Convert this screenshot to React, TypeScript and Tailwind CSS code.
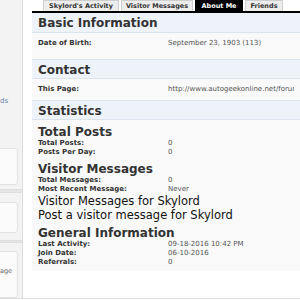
import React from 'react';

const tabs = [
    { label: "Skylord's Activity", w: 'w-[76px]', active: false },
    { label: 'Visitor Messages', w: 'w-[72px]', active: false },
    { label: 'About Me', w: 'w-[48px]', active: true },
    { label: 'Friends', w: 'w-[38px]', active: false },
];

function Header({ title, top }: { title: string; top?: boolean }) {
    return (
        <div
            className={`h-[20px] bg-[#eef3f9] border-b border-[#dbe4ee] pl-[6px] text-[12px] leading-[20px] font-bold text-[#333] ${
                top ? '' : 'border-t'
            }`}
        >
            {title}
        </div>
    );
}

function Row({ label, value }: { label: string; value: string }) {
    return (
        <div className="grid grid-cols-[130px_1fr] text-[7px] leading-[9px] whitespace-nowrap">
            <span className="font-bold text-[#333]">{label}</span>
            <span className="text-[#555] overflow-hidden">{value}</span>
        </div>
    );
}

function SubHead({ title, className = '' }: { title: string; className?: string }) {
    return <div className={`text-[12px] leading-[13px] font-bold text-[#333] ${className}`}>{title}</div>;
}

export default function App() {
    return (
        <div className="w-[300px] h-[300px] overflow-hidden bg-white flex flex-col font-['DejaVu_Sans',sans-serif]">
            <div className="h-[298px] flex">
                {/* sidebar, cut off at the left edge */}
                <aside className="w-[23px] shrink-0 bg-[#f3f3f3] border-r border-[#dcdcdc] overflow-hidden flex flex-col pt-[97px]">
                    <div className="text-[7px] leading-[8px] text-[#6a86a6] whitespace-nowrap">ds</div>
                    <div className="mt-[43px] -ml-[4px] w-[22px] h-[41px] bg-[#fbfbfb] border border-[#e2e2e2] rounded-[3px]" />
                    <div className="mt-[4px] h-[4px] bg-[#e6e6e6] border-y border-[#dedede]" />
                    <div className="mt-[9px] -ml-[4px] w-[22px] h-[34px] bg-[#fbfbfb] border border-[#e2e2e2] rounded-[3px]" />
                    <div className="mt-[7px] h-[4px] bg-[#e6e6e6] border-y border-[#dedede]" />
                    <div className="mt-[8px] -ml-[4px] w-[22px] h-[50px] bg-[#fbfbfb] border border-[#e2e2e2] rounded-[3px] pt-[15px] pl-[3px] text-[6.5px] text-[#666] whitespace-nowrap">
                        age
                    </div>
                </aside>

                <main className="flex-1 pl-[9px] min-w-0">
                    <div className="h-[11px] flex gap-[2px] ml-[11px]">
                        {tabs.map((t) => (
                            <div
                                key={t.label}
                                className={`${t.w} shrink-0 h-[11px] text-center text-[6.5px] leading-[11px] font-bold whitespace-nowrap border-x border-t ${
                                    t.active
                                        ? 'bg-black text-white border-black'
                                        : 'bg-[#ededed] text-[#333] border-[#cfcfcf]'
                                }`}
                            >
                                {t.label}
                            </div>
                        ))}
                    </div>

                    <div className="border-t-2 border-black bg-[#f9f9f9]">
                        <Header title="Basic Information" top />
                        <div className="h-[26px] pt-[6px] px-[6px]">
                            <Row label="Date of Birth:" value="September 23, 1903 (113)" />
                        </div>

                        <Header title="Contact" />
                        <div className="h-[21px] pt-[6px] px-[6px]">
                            <Row label="This Page:" value="http://www.autogeekonline.net/forum/" />
                        </div>

                        <Header title="Statistics" />
                        <div className="px-[6px] pt-[6px] pb-[4px]">
                            <SubHead title="Total Posts" />
                            <Row label="Total Posts:" value="0" />
                            <Row label="Posts Per Day:" value="0" />

                            <SubHead title="Visitor Messages" className="mt-[6px]" />
                            <Row label="Total Messages:" value="0" />
                            <Row label="Most Recent Message:" value="Never" />
                            <div className="text-[11.5px] leading-[14px] text-[#111] whitespace-nowrap">
                                Visitor Messages for Skylord
                            </div>
                            <div className="text-[11.5px] leading-[14px] text-[#111] whitespace-nowrap">
                                Post a visitor message for Skylord
                            </div>

                            <SubHead title="General Information" className="mt-[5px]" />
                            <Row label="Last Activity:" value="09-18-2016 10:42 PM" />
                            <Row label="Join Date:" value="06-10-2016" />
                            <Row label="Referrals:" value="0" />
                        </div>
                    </div>
                </main>
            </div>
            <div className="h-px bg-[#dcdcdc]" />
        </div>
    );
}
